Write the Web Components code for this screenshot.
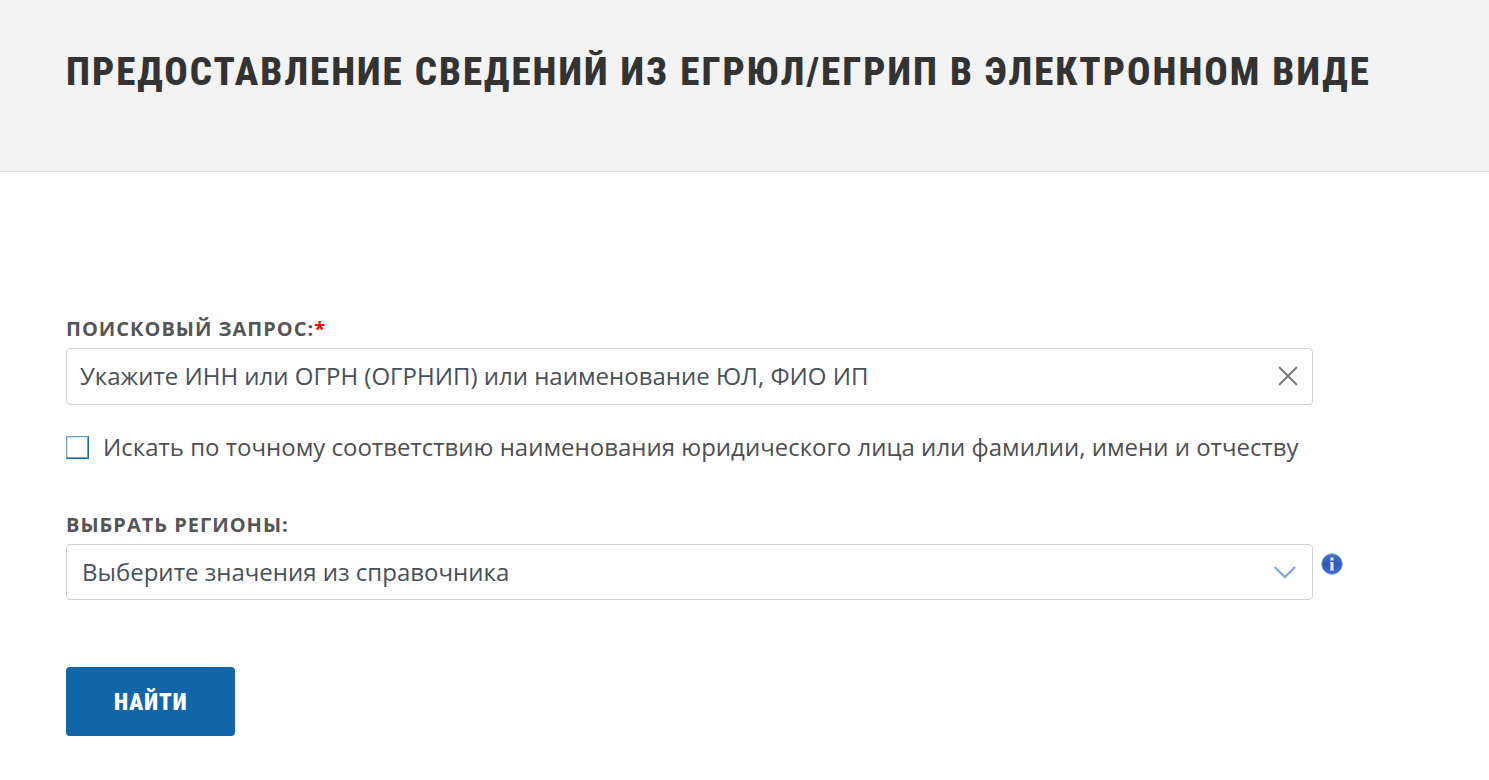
<!DOCTYPE html>
<html lang="ru">
<head>
<meta charset="utf-8">
<meta name="viewport" content="width=device-width, initial-scale=1">
<title>Предоставление сведений из ЕГРЮЛ/ЕГРИП</title>
<style>
  body { margin: 0; background: #fff; color: #4f4f4f; font-family: "Open Sans", "Noto Sans", sans-serif; font-size: 24px; }
</style>
</head>
<body>
<registry-page></registry-page>
<script>
  class BaseElement extends HTMLElement {
    constructor() {
      super();
      this.attachShadow({ mode: "open" }).innerHTML =
        `<style>*{box-sizing:border-box}</style>` + this.render();
    }
  }

  customElements.define("page-header", class extends BaseElement {
    render() {
      return `
      <style>
        :host { display: block; background: #f3f3f3; border-bottom: 1px solid #dfdfdf; padding: 48px 66px 75px; }
        h1 { margin: 0; color: #333; font: 800 39px/48px "Roboto Condensed", Roboto, sans-serif; letter-spacing: 2px; white-space: nowrap; }
      </style>
      <h1><slot></slot></h1>`;
    }
  });

  const fieldStyle = `
    :host { display: block; }
    label { display: block; font-size: 20px; font-weight: 700; line-height: 28px; letter-spacing: 1px; text-transform: uppercase; margin-bottom: 5px; color: #555; }
    .box { position: relative; }
    input, select { display: block; width: 100%; height: 56px; margin: 0; border: 1px solid #ccd2da; border-radius: 4px; background: #fff; color: #495057; font: inherit; outline: 0; appearance: none; }
  `;

  customElements.define("search-field", class extends BaseElement {
    render() {
      return `
      <style>${fieldStyle}
        b { color: #f00; font-weight: 700; }
        input { padding: 0 60px 2px 13px; height: 57px; }
        input::placeholder { color: #495057; opacity: 1; }
        button { position: absolute; right: 14px; top: 17px; width: 22px; height: 22px; padding: 0; border: 0; background: none; }
        svg { display: block; }
      </style>
      <label for="query"><slot></slot><b>*</b></label>
      <div class="box">
        <input id="query" type="text" placeholder="Укажите ИНН или ОГРН (ОГРНИП) или наименование ЮЛ, ФИО ИП">
        <button type="button" aria-label="Очистить"><svg width="22" height="22" viewBox="0 0 22 22" fill="none" stroke="#777" stroke-width="2"><path d="M2 2 20 20M20 2 2 20"/></svg></button>
      </div>`;
    }
  });

  customElements.define("check-field", class extends BaseElement {
    render() {
      return `
      <style>
        :host { display: block; }
        label { display: flex; align-items: center; gap: 14px; line-height: 36px; white-space: nowrap; }
        input { appearance: none; flex: none; width: 23px; height: 23px; margin: 0; border: 1px solid; border-color: #6f9fca #1365a9 #1365a9 #6f9fca; background: #fff; box-shadow: inset -1px -1px #6f9fca, inset 1px 1px #dce9f5; }
      </style>
      <label><input type="checkbox"><span><slot></slot></span></label>`;
    }
  });

  customElements.define("region-field", class extends BaseElement {
    render() {
      return `
      <style>${fieldStyle}
        select { padding: 0 60px 2px 15px; }
        .box svg { position: absolute; right: 16px; top: 21px; pointer-events: none; }
      </style>
      <label for="region"><slot></slot></label>
      <div class="box">
        <select id="region"><option>Выберите значения из справочника</option></select>
        <svg width="24" height="14" viewBox="0 0 24 14" fill="none" stroke="#77a4d2" stroke-width="2"><path d="M1.500 2 12 12 22 2"/></svg>
      </div>`;
    }
  });

  customElements.define("info-icon", class extends BaseElement {
    render() {
      return `
      <style>:host { display: block; } svg { display: block; }</style>
      <svg role="img" aria-label="Справка" width="22" height="22" viewBox="0 0 22 22">
        <defs><linearGradient id="g" x1="0" y1="0" x2="0" y2="1"><stop offset="0" stop-color="#4a78c4"/><stop offset=".5" stop-color="#2d58bd"/><stop offset="1" stop-color="#3f6be0"/></linearGradient></defs>
        <circle cx="11" cy="11" r="10.3" fill="url(#g)" stroke="#7fa5cf" stroke-width="1"/>
        <path fill="#e8f0ff" d="M9.500 4.500h3v3h-3zM9 9h3.500v7.500h.5v1H9v-1h.5V10H9z"/>
      </svg>`;
    }
  });

  customElements.define("submit-button", class extends BaseElement {
    render() {
      return `
      <style>
        :host { display: block; }
        button { display: block; height: 69px; padding: 2px 48px 0; border: 0; border-radius: 4px; background: #1365a9; color: #fff; font: 900 23px/28px "Roboto Condensed", Roboto, sans-serif; letter-spacing: 1px; }
      </style>
      <button type="submit"><slot></slot></button>`;
    }
  });

  customElements.define("registry-page", class extends BaseElement {
    render() {
      return `
      <style>
        :host { display: block; }
        form { display: grid; grid-template-columns: minmax(0, 1fr) 102px; column-gap: 8px; padding: 143px 66px 40px; }
        search-field, check-field, region-field, submit-button { grid-column: 1; }
        check-field { margin: 24px 0 46px; }
        info-icon { grid-column: 2; margin-top: 42px; }
        submit-button { margin-top: 67px; }
      </style>
      <page-header>ПРЕДОСТАВЛЕНИЕ СВЕДЕНИЙ ИЗ ЕГРЮЛ/ЕГРИП В ЭЛЕКТРОННОМ ВИДЕ</page-header>
      <main><form>
        <search-field>Поисковый запрос:</search-field>
        <check-field>Искать по точному соответствию наименования юридического лица или фамилии, имени и отчеству</check-field>
        <region-field>Выбрать регионы:</region-field>
        <info-icon></info-icon>
        <submit-button>НАЙТИ</submit-button>
      </form></main>`;
    }
  });
</script>
</body>
</html>
